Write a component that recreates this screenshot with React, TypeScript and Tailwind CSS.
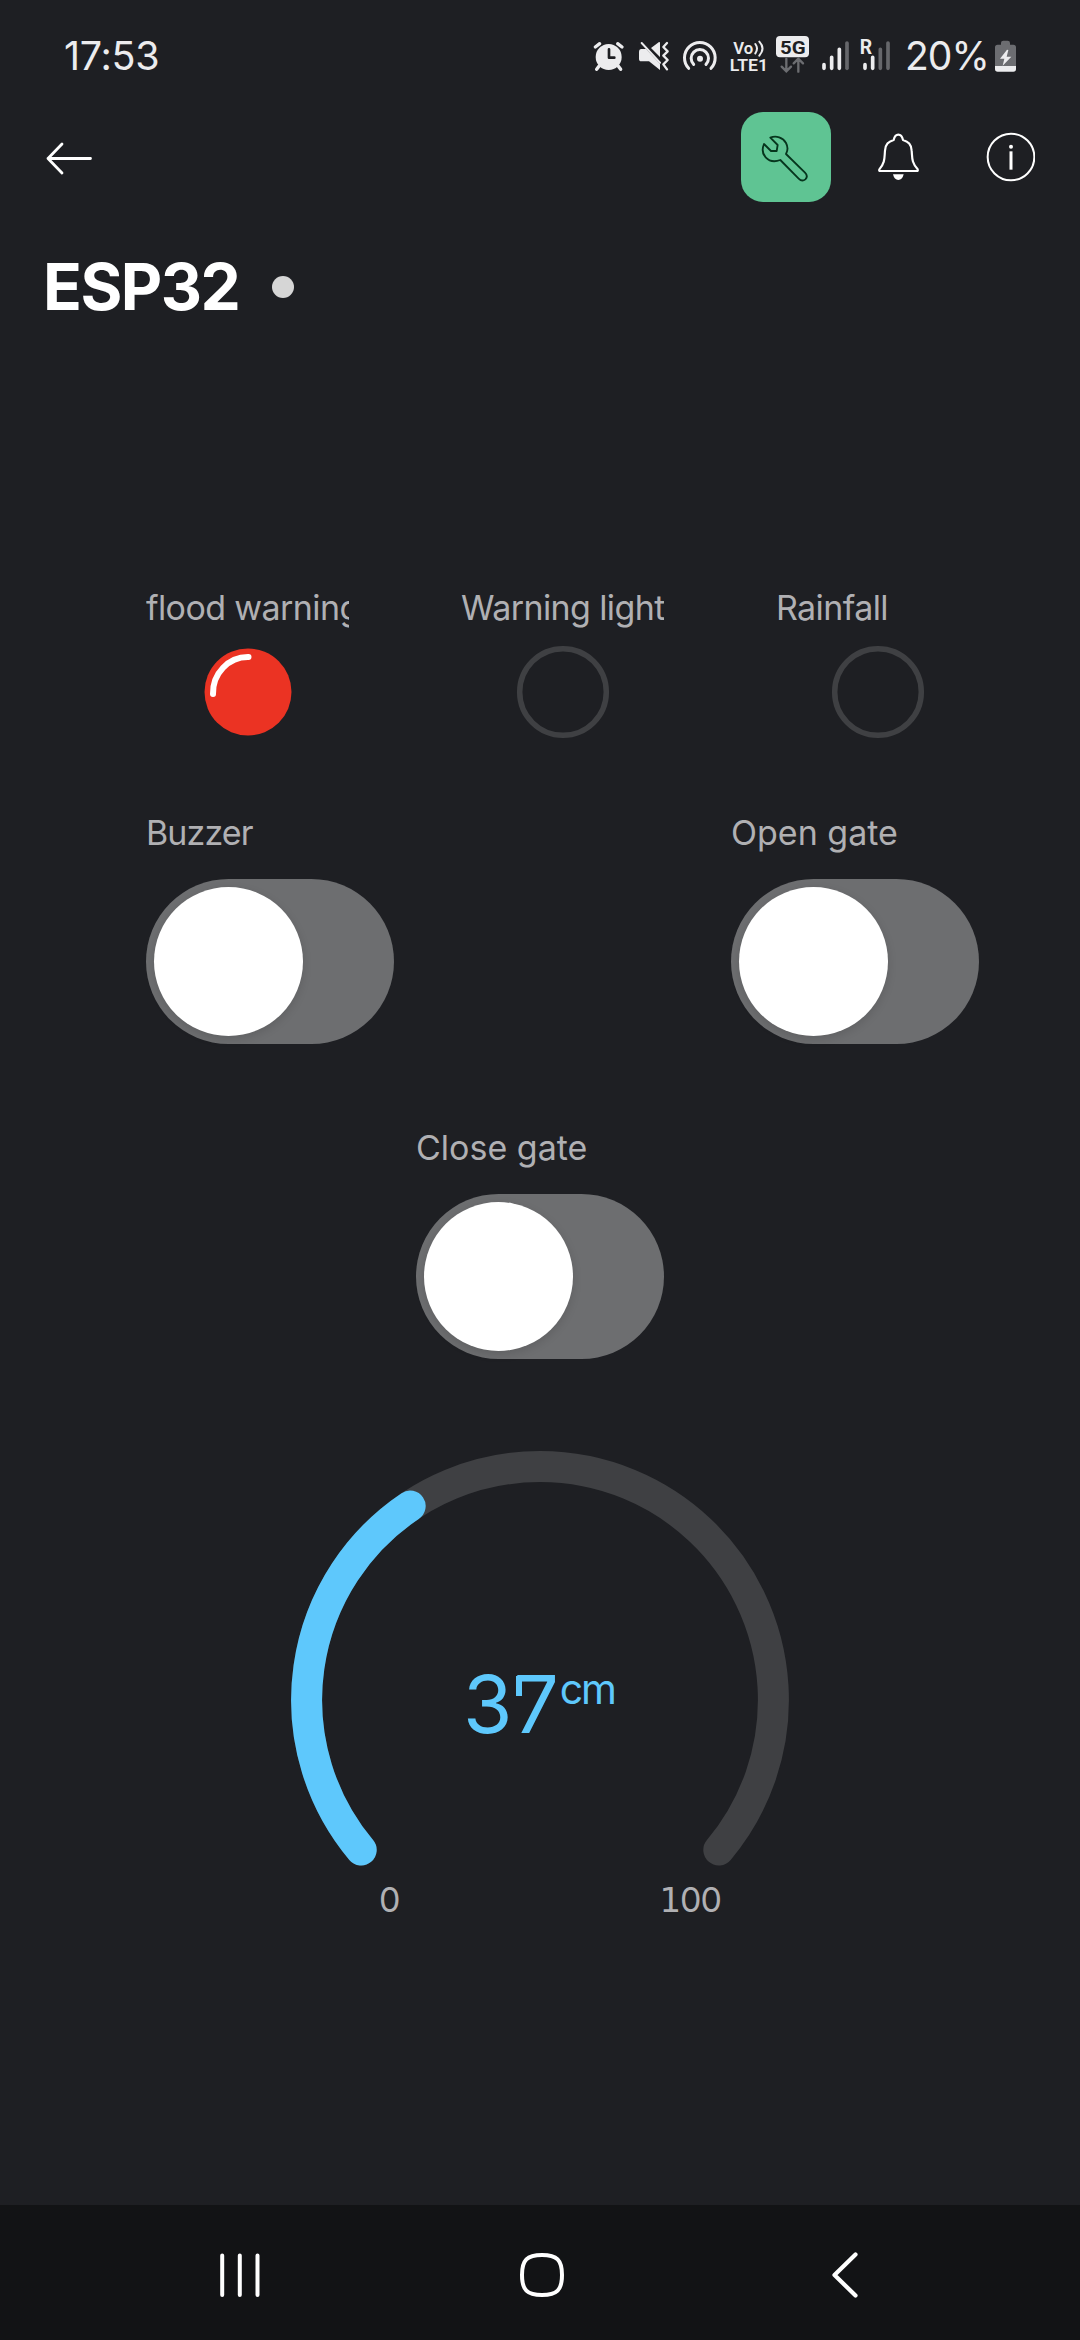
import type { ReactNode } from "react";

const FG = "#ececee";

function StatusBar() {
  return (
    <div className="flex h-[70px] items-center pl-[64px] pr-[63px] text-[#ececee]">
      <span className="mt-[2px] font-['Inter'] text-[39.5px] leading-[70px] tracking-[-0.3px]">17:53</span>
      <div className="ml-auto flex items-center">
        {/* alarm */}
        <svg className="h-[70px] w-[34px]" viewBox="36 0 102 210" fill="none">
          <circle cx="86" cy="111" r="39" fill={FG} />
          <path d="M58 137l-8 11M114 137l8 11M46 81l13-10M126 81l-13-10" stroke={FG} strokeWidth="10" strokeLinecap="round" />
          <path d="M87 88v25h16" stroke="#1e1f23" strokeWidth="8" strokeLinecap="round" strokeLinejoin="round" />
        </svg>
        {/* muted with vibration */}
        <svg className="ml-[11px] h-[70px] w-[35px]" viewBox="171 0 105 210" fill="none">
          <path d="M184 87h14l42 44v19l-33-26h-23q-7 0-7-8v-20q0-9 7-9zM213 84l24-18q3-1 3 3v42z" fill={FG} />
          <path d="M185 69l55 59" stroke={FG} strokeWidth="6" strokeLinecap="round" />
          <path d="M261 69l-11 12 13 13-13 13 13 13-13 13 11 15" stroke={FG} strokeWidth="7" strokeLinecap="round" strokeLinejoin="round" />
        </svg>
        {/* hotspot */}
        <svg className="ml-[10px] h-[70px] w-[36px]" viewBox="306 0 108 210" fill="none" stroke={FG} strokeWidth="9" strokeLinecap="round">
          <path d="M326 145a46 46 0 1 1 67 0" />
          <path d="M341 133a26 26 0 1 1 37 0" />
          <circle cx="360" cy="116" r="9" fill={FG} stroke="none" />
        </svg>
        {/* VoLTE */}
        <svg className="ml-[10px] h-[70px] w-[42px]" viewBox="444 0 126 210" fill="none">
          <text x="460" y="101" fill={FG} fontFamily="Roboto" fontWeight="600" fontSize="50" textLength="60" lengthAdjust="spacingAndGlyphs">Vo</text>
          <path d="M526 72q10 13 0 28M538 65q19 20 0 42" stroke={FG} strokeWidth="6" strokeLinecap="round" />
          <text x="449" y="153" fill={FG} fontFamily="Roboto" fontWeight="600" fontSize="50" textLength="115" lengthAdjust="spacingAndGlyphs">LTE1</text>
        </svg>
        {/* 5G */}
        <svg className="ml-[5px] h-[70px] w-[35px]" viewBox="585 0 105 210" fill="none">
          <rect x="588" y="48" width="99" height="64" rx="12" fill={FG} />
          <text x="600" y="101" fill="#1e1f23" fontFamily="Roboto" fontWeight="700" fontSize="57" textLength="77" lengthAdjust="spacingAndGlyphs">5G</text>
          <path d="M619 116v37M605 140l14 14 14-14M655 155v-37M641 130l14-14 14 14" stroke="#6c6d71" strokeWidth="7" strokeLinecap="round" />
        </svg>
        {/* first SIM signal */}
        <svg className="ml-[10px] h-[70px] w-[30px]" viewBox="60 0 90 210" strokeWidth="11" strokeLinecap="round">
          <path d="M72 134v11M95 112v33M118 88v57" stroke={FG} />
          <path d="M141 69v76" stroke="#66676b" />
        </svg>
        {/* roaming SIM signal */}
        <svg className="ml-[9px] h-[70px] w-[32px]" viewBox="177 0 96 210" strokeWidth="11" strokeLinecap="round">
          <path d="M195 134v11M218 112v33" stroke={FG} />
          <path d="M241 88v57M264 69v76" stroke="#66676b" />
          <text x="179" y="102" fill={FG} fontFamily="Roboto" fontWeight="700" fontSize="58">R</text>
        </svg>
        <span className="mt-[2px] ml-[14px] w-[83px] font-['Inter'] text-[39px] leading-[70px] tracking-[-1px]">20%</span>
        {/* battery */}
        <svg className="ml-[6px] h-[70px] w-[23px]" viewBox="582 0 69 210">
          <path d="M603 69q0-7 7-7h13q7 0 7 7v5h10q8 0 8 8v56h-63v-56q0-8 8-8h10z" fill="#6c6d71" />
          <path d="M585 138h63v9q0 8-8 8h-47q-8 0-8-8z" fill={FG} />
          <path d="M621 89l-21 27h13l-5 21 26-27h-14l5-20z" fill={FG} />
        </svg>
      </div>
    </div>
  );
}

function TopBar() {
  return (
    <div className="mt-[22px] flex h-[90px] items-center pl-[46px] pr-[45px]">
      <svg className="h-[36px] w-[47px]" viewBox="0 0 47 36" fill="none" stroke="#fff" strokeWidth="2.8" strokeLinecap="round" strokeLinejoin="round">
        <path d="M2 19.500H44.500M16 5L2 19.500L16 34" />
      </svg>
      <div className="ml-auto flex items-center">
        <div className="h-[90px] w-[90px] rounded-[22px] bg-[#5fc493]">
          <svg className="h-full w-full" viewBox="63 36 270 270" fill="none" stroke="#06351d" strokeWidth="5.500" strokeLinejoin="round">
            <path d="M151 113C168 106 189 112 198 129C205 142 203 153 198 162L255 218C262 225 262 232 256 238C250 243 242 242 236 236L181 180C165 186 148 184 137 172C127 161 126 146 132 132L153 153H170L173 135Z" />
          </svg>
        </div>
        <svg className="ml-[46px] h-[50px] w-[43px]" viewBox="471 99 129 150" fill="none" stroke="#fff" strokeWidth="6.500" strokeLinejoin="round">
          <path d="M481 216Q476 216 478 211C496 190 493 176 495 155C496 135 505 128 521 123C524 110 528 107 535 107C542 107 546 110 549 123C565 128 574 135 575 155C577 176 574 190 593 211Q595 216 590 216Z" />
          <path d="M519 226H551Q547 243 535 243Q523 243 519 226Z" fill="#fff" stroke="none" />
        </svg>
        <svg className="ml-[66px] h-[50px] w-[49px]" viewBox="795 97 147 150" fill="none">
          <circle cx="870" cy="172" r="70" stroke="#fff" strokeWidth="6" />
          <circle cx="870" cy="141" r="6" fill="#fff" />
          <path d="M870 155V210" stroke="#fff" strokeWidth="9" />
        </svg>
      </div>
    </div>
  );
}

function Label({ children, tracking }: { children: ReactNode; tracking: string }) {
  return (
    <div className={`h-[40px] overflow-hidden font-['Inter'] text-[34px] leading-[40px] whitespace-nowrap text-[#b0b0b3] ${tracking}`}>
      {children}
    </div>
  );
}

function Led({ label, on }: { label: string; on?: boolean }) {
  return (
    <div className="flex w-[203px] flex-col">
      <Label tracking="tracking-[-0.6px]">{label}</Label>
      <svg className="mx-auto mt-[16px] h-[96px] w-[96px]" viewBox="0 0 96 96" fill="none">
        {on ? (
          <>
            <circle cx="48" cy="48" r="43.500" fill="#eb3323" />
            <path d="M13 50A35 36 0 0 1 48.500 13" stroke="#fff" strokeWidth="6" strokeLinecap="round" />
          </>
        ) : (
          <circle cx="48" cy="48" r="43.300" stroke="#3f4043" strokeWidth="5.500" />
        )}
      </svg>
    </div>
  );
}

function Toggle({ label, tracking }: { label: string; tracking: string }) {
  return (
    <div className="w-[248px]">
      <Label tracking={tracking}>{label}</Label>
      <div className="mt-[26px] h-[165px] rounded-full bg-[#6d6e70] p-[8px]">
        <div className="h-[149px] w-[149px] rounded-full bg-white shadow-[0_3px_10px_rgba(0,0,0,0.13)]" />
      </div>
    </div>
  );
}

function Gauge({ value }: { value: number }) {
  const angle = ((140 + (260 * value) / 100) * Math.PI) / 180;
  const x = 250 + 233.4 * Math.cos(angle);
  const y = 250 + 233.4 * Math.sin(angle);
  return (
    <div className="mx-auto mt-[91px] w-[500px]">
      <div className="relative h-[430px]">
        <svg className="h-[430px] w-[500px]" viewBox="0 0 500 430" fill="none" strokeWidth="31" strokeLinecap="round">
          <path d="M71.200 400A233.400 233.400 0 1 1 428.800 400" stroke="#3f4043" />
          <path d={`M71.200 400A233.400 233.400 0 0 1 ${x} ${y}`} stroke="#5ec8fc" />
        </svg>
        <div className="absolute inset-x-0 top-[209px] flex items-start pl-[173px] font-['Inter'] text-[#5ec8fc]">
          <span className="relative text-[80px] leading-[90px] tracking-[1px]">
            {value}
            <i className="absolute top-[17px] left-[53px] h-[20px] w-[6px] bg-[#5ec8fc]" />
          </span>
          <span className="text-[41px] leading-[60px] tracking-[-2px]">cm</span>
        </div>
      </div>
      <div className="flex h-[40px] items-center justify-between pl-[89px] pr-[69px] font-['Inter'] text-[34px] leading-[40px] text-[#b0b0b3]">
        <span>0</span>
        <span className="tracking-[-1px]"><span className="font-['DejaVu_Sans']">1</span>00</span>
      </div>
    </div>
  );
}

function NavBar() {
  return (
    <div className="mt-auto grid h-[135px] grid-cols-3 items-center bg-[#121315] pt-[5px] pl-[216px] pr-[214px]">
      <svg className="h-[50px] w-[48px]" viewBox="0 0 48 50" stroke="#fff" strokeWidth="4" strokeLinecap="round">
        <path d="M6.200 5.500v39.500M23.800 5.500v39.500M41.500 5.500v39.500" />
      </svg>
      <svg className="h-[50px] w-[50px] justify-self-center" viewBox="0 0 50 50" fill="none" stroke="#fff" strokeWidth="4">
        <path d="M26 5C41 5 46 10 46 25S41 45 26 45S6 40 6 25S11 5 26 5Z" />
      </svg>
      <svg className="mr-[4px] h-[50px] w-[32px] justify-self-end" viewBox="0 0 32 50" fill="none" stroke="#fff" strokeWidth="4.200" strokeLinecap="round" strokeLinejoin="round">
        <path d="M25.500 4.500L4.500 25L25.500 45.500" />
      </svg>
    </div>
  );
}

export default function App() {
  return (
    <div className="flex h-[2340px] w-[1080px] flex-col overflow-hidden bg-[#1e1f23] pt-[20px]">
      <StatusBar />
      <TopBar />
      <div className="mt-[45px] flex h-[80px] items-center pl-[43px]">
        <h1 className="w-[229px] font-['Inter'] text-[64px] leading-[80px] font-bold tracking-[-1.5px] text-white">ESP32</h1>
        <span className="h-[22px] w-[22px] rounded-full bg-[#d6d6d6]" />
      </div>
      <div className="mt-[261px] flex justify-between pl-[146px] pr-[101px]">
        <Led label="flood warning" on />
        <Led label="Warning light" />
        <Led label="Rainfall" />
      </div>
      <div className="mt-[73px] flex justify-between pl-[146px] pr-[101px]">
        <Toggle label="Buzzer" tracking="tracking-[-0.9px]" />
        <Toggle label="Open gate" tracking="tracking-[0px]" />
      </div>
      <div className="mt-[84px] flex justify-center">
        <Toggle label="Close gate" tracking="tracking-[0px]" />
      </div>
      <Gauge value={37} />
      <NavBar />
    </div>
  );
}
